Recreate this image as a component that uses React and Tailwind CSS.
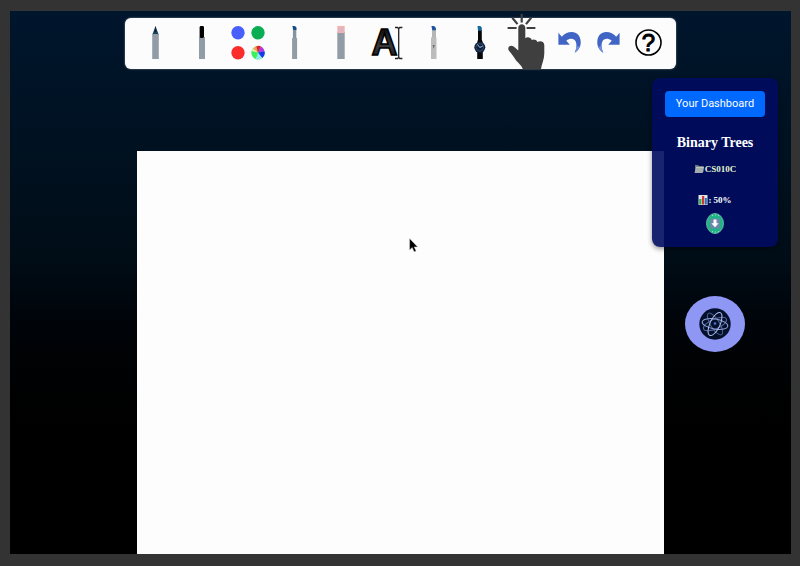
import React from 'react';

function Icon({ children }) {
  return (
    <svg viewBox="0 0 46 51" className="h-[51px] w-[46px] shrink-0 overflow-visible" aria-hidden="true">
      {children}
    </svg>
  );
}

const PenIcon = () => (
  <Icon>
    <path d="M20.200 17 23.500 8l3.300 9z" fill="#17405f" />
    <path d="M22.500 14 23.500 8l1 6z" fill="#0b2238" />
    <rect x="20.200" y="16" width="6.600" height="25" fill="#929ca6" />
  </Icon>
);

const MarkerIcon = () => (
  <Icon>
    <rect x="20" y="19" width="6" height="22" fill="#929ca6" />
    <rect x="20.600" y="8" width="4.400" height="12" rx="1.400" fill="#000" />
  </Icon>
);

const ColorsIcon = () => (
  <Icon>
    <circle cx="13" cy="14.800" r="6.700" fill="#485ffb" />
    <circle cx="33" cy="14.800" r="6.700" fill="#09ad52" />
    <circle cx="13" cy="34.800" r="6.700" fill="#fb2c2c" />
    <circle cx="33" cy="34.800" r="6.700" fill="#3df05a" />
    <path d="M33 34.800 28 30.400a6.700 6.700 0 0 1 3.400-2.100z" fill="#f4a259" />
    <path d="M33 34.800 31.400 28.300a6.700 6.700 0 0 1 4.400-.1z" fill="#e8202a" />
    <path d="M33 34.800 35.800 28.200a6.700 6.700 0 0 1 3.700 5z" fill="#c32fe8" />
    <path d="M33 34.800 39.500 33.200a6.700 6.700 0 0 1-2.300 6.800z" fill="#1737ef" />
    <path d="M33 34.800 37.200 40a6.700 6.700 0 0 1-6.400 1z" fill="#8fe8ee" />
    <path d="M33 34.800 28 30.400a6.700 6.700 0 0 0-1.400 2.400z" fill="#f4e6b0" />
  </Icon>
);

const FinePenIcon = () => (
  <Icon>
    <rect x="21.900" y="11" width="3.400" height="10" fill="#8494a5" />
    <rect x="21.100" y="20" width="5" height="21" fill="#929ca6" />
    <path d="M21.300 8h2.600l1.600 1.600V12h-3.200z" fill="#174c86" />
  </Icon>
);

const EraserIcon = () => (
  <Icon>
    <rect x="19.300" y="14" width="7.400" height="27" fill="#929ca6" />
    <rect x="19.300" y="8" width="7.400" height="7" fill="#efb4b2" />
    <path d="M21 14l4-4M21 10.500l4 3" stroke="#d0b5dc" strokeWidth="1" />
  </Icon>
);

const TextIcon = () => (
  <Icon>
    <defs>
      <linearGradient id="letter" x1="0" y1="0" x2="0" y2="1">
        <stop offset="0" stopColor="#000" />
        <stop offset="0.600" stopColor="#3a3a3a" />
        <stop offset="1" stopColor="#050505" />
      </linearGradient>
    </defs>
    <text
      x="7.500"
      y="37"
      className="font-['Liberation_Sans',sans-serif] text-[36px] font-bold"
      fill="url(#letter)"
      stroke="#000"
      strokeWidth="1.500"
    >
      A
    </text>
    <path d="M31 9.500h2.700l1 1.300 1-1.300h2.700M34.700 10.500v29M31 40.500h2.700l1-1.300 1 1.300h2.700" fill="none" stroke="#222" strokeWidth="1.300" />
  </Icon>
);

const LightPenIcon = () => (
  <Icon>
    <rect x="21" y="10" width="4" height="11" fill="#b4b6b8" />
    <rect x="20" y="19.500" width="5.500" height="21.500" fill="#bcbcbc" />
    <path d="M20.400 8h2.800l1.700 2v2.300h-3.600z" fill="#1c56a0" />
    <path d="M21.700 27h2l-1 4z" fill="#666" />
  </Icon>
);

const WatchIcon = () => (
  <Icon>
    <path d="M21 12h3.800v9.500l1 3v16.500H20.200V24.500l.8-3z" fill="#05070b" />
    <path d="M20.500 8h2.800l1.500 1.500v3.200H21z" fill="#19699c" />
    <circle cx="22.800" cy="29.300" r="5.500" fill="#101f38" />
    <circle cx="22.800" cy="29.300" r="3.800" fill="none" stroke="#34547e" strokeWidth="0.800" />
    <path d="M20.500 26.500l2.300 3 3-1.500" fill="none" stroke="#b9cbe4" strokeWidth="0.900" />
  </Icon>
);

const HandIcon = () => (
  <Icon>
    <path
      d="M20 51.500c-1.500-4.500-5-6.500-7.400-9.800-2-2.800-3.700-5.700-6-8.200-3.400-3.700.4-7.700 4.400-4.700l4.300 3.700V9.800c0-4.700 7-4.700 7 0v10.400c1.700-1.600 5.800-1 6.500 1.800 1.800-1.300 5-.5 5.700 2 2.500-1.600 6.800-1 6.800 3.300v8c0 6-2.500 10.500-3.400 16.200z"
      fill="#3f3f3f"
    />
    <g stroke="#3f3f3f" strokeWidth="2.200">
      <path d="M18.700-4v8.400M9.300-.2l5.200 6.300M28.200-.2l-5.200 6.300M4.600 10h9M23.600 10h8.800" />
    </g>
  </Icon>
);

function CurvedArrow() {
  return (
    <>
      <path
        d="M11.400 14.700v12h11.400l-3.500-4c3.500-2.700 7.700-2.700 9.400.8 1.400 3 .9 7.200-1 11.200 4.300-2.700 6.300-6.500 6-11.200-.4-6-4-9.500-8.700-9.500-4.300 0-7.800 1.800-10.200 4.700z"
        fill="#4165c5"
      />
      <path d="M28.700 23.500c1.400 3 .9 7.200-1 11.200 2.700-1.700 4.400-3.900 5.300-6.400-1.600 1.400-2.900-.3-4.300-4.800z" fill="#6f8edb" />
    </>
  );
}

const UndoIcon = () => (
  <Icon>
    <CurvedArrow />
  </Icon>
);

const RedoIcon = () => (
  <Icon>
    <g transform="matrix(-1 0 0 1 45 0)">
      <CurvedArrow />
    </g>
  </Icon>
);

const HelpIcon = () => (
  <Icon>
    <circle cx="22.500" cy="24.500" r="12.500" fill="none" stroke="#000" strokeWidth="1.600" />
    <text
      x="22.500"
      y="33"
      textAnchor="middle"
      stroke="#000"
      strokeWidth="1"
      className="font-['Liberation_Sans',sans-serif] text-[24px]"
    >
      ?
    </text>
  </Icon>
);

const tools = [
  ['Pen', PenIcon],
  ['Marker', MarkerIcon],
  ['Colors', ColorsIcon],
  ['Fine pen', FinePenIcon],
  ['Eraser', EraserIcon],
  ['Text', TextIcon],
  ['Highlighter', LightPenIcon],
  ['Laser', WatchIcon],
  ['Pointer', HandIcon],
  ['Undo', UndoIcon],
  ['Redo', RedoIcon],
  ['Help', HelpIcon],
];

function Toolbar() {
  return (
    <div
      role="toolbar"
      aria-label="Drawing tools"
      className="grid w-full max-w-[551px] grid-cols-[repeat(9,minmax(0,7fr))_repeat(3,minmax(0,6fr))] rounded-md bg-[#fcfcfd] px-[7px] shadow-[0_0_2px_#8a93a0]"
    >
      {tools.map(([label, Glyph]) => (
        <button key={label} type="button" aria-label={label} className="flex h-[51px] items-center justify-center">
          <Glyph />
        </button>
      ))}
    </div>
  );
}

function FolderIcon() {
  return (
    <svg viewBox="0 0 10 10" className="size-[10px]" aria-hidden="true">
      <path d="M1 1h3l1 1h4.500v6H1z" fill="#6d7478" />
      <path d="M2 3.300h8L8.700 9H.500z" fill="#a5acb0" />
      <path d="M2 3.300h8" stroke="#e1e4e6" strokeWidth="0.700" />
    </svg>
  );
}

function ChartIcon() {
  return (
    <svg viewBox="0 0 10 10" className="size-[10px]" aria-hidden="true">
      <rect width="9" height="10" x="0.500" fill="#dfe6ea" />
      <rect x="1.200" y="4" width="2.200" height="5.500" fill="#2fa84f" />
      <rect x="4" y="1" width="2.200" height="8.500" fill="#d5342f" />
      <rect x="6.800" y="3" width="2" height="6.500" fill="#2c6fb5" />
    </svg>
  );
}

function DownloadIcon() {
  return (
    <svg viewBox="0 0 18 21" className="h-[21px] w-[18px]" aria-hidden="true">
      <ellipse cx="9" cy="10.500" rx="8.500" ry="10" fill="#1fb385" stroke="#7cc9b4" strokeWidth="0.800" />
      <path d="M6 2.500h.8M9 2h.8M12 2.500h.8M6 18.500h.8M9 19h.8M12 18.500h.8" stroke="#c8f0df" strokeWidth="0.900" />
      <rect x="4" y="5.500" width="10" height="10" rx="1.500" fill="#6a88a8" />
      <path d="M7.500 6.500h3v3.800h2.200L9 14.200l-3.700-3.900h2.200z" fill="#fff" />
    </svg>
  );
}

function AtomIcon() {
  return (
    <svg viewBox="0 0 32 32" className="size-8" fill="none" aria-hidden="true">
      <circle cx="16" cy="16" r="15.700" fill="#04102b" />
      <g strokeWidth="1">
        <ellipse cx="16" cy="16" rx="12.500" ry="4.500" stroke="#4a5d8c" transform="rotate(58 16 16)" />
        <ellipse cx="16" cy="16" rx="12.500" ry="5" stroke="#52659a" transform="rotate(-24 16 16)" />
        <ellipse cx="16" cy="16" rx="13" ry="5" stroke="#8fa3dc" transform="rotate(10 16 16)" />
        <ellipse cx="16" cy="16" rx="12.500" ry="5" stroke="#b4c2f0" transform="rotate(-65 16 16)" />
      </g>
      <circle cx="16" cy="15.500" r="1.300" fill="#4a78e0" />
    </svg>
  );
}

function LessonPanel() {
  return (
    <section className="flex w-full flex-col items-center rounded-lg bg-[#000c61]/90 py-[13px] font-['Liberation_Serif',serif] font-bold text-white shadow-[0_2px_5px_rgba(0,0,0,0.4)]">
      <button
        type="button"
        className="h-[26px] w-[100px] rounded bg-[#0069ff] font-[Roboto,sans-serif] text-[11px] font-normal whitespace-nowrap"
      >
        Your Dashboard
      </button>
      <h1 className="mt-4 text-[14px] leading-5">Binary Trees</h1>
      <p className="mt-[9px] flex items-center gap-px text-[9px] leading-[14px] text-[#e3f5d3]">
        <FolderIcon />
        CS010C
      </p>
      <p className="mt-[17px] flex items-center text-[9px] leading-[14px]">
        <ChartIcon />
        : 50%
      </p>
      <button type="button" aria-label="Download" className="mt-[6px]">
        <DownloadIcon />
      </button>
    </section>
  );
}

function Pointer() {
  return (
    <svg viewBox="0 0 10 16" className="absolute top-[227px] left-[399px] h-4 w-[10px]" aria-hidden="true">
      <path d="M.600.500v11.500l2.600-2.400 1.900 4.200 2-.9-1.900-4h3.400z" fill="#000" stroke="#ccc" strokeWidth="0.500" />
    </svg>
  );
}

export default function App() {
  return (
    <div className="flex min-h-screen flex-col bg-[#333] pt-[11px] pr-[9px] pb-3 pl-[10px]">
      <main className="relative flex flex-1 flex-col items-center bg-linear-to-b from-[#00162d] via-[#000d17] via-45% to-black to-85% pt-[7px]">
        <Toolbar />
        <div className="mt-[82px] w-full max-w-[527px] flex-1 bg-[#fdfdfd]" />
        <Pointer />
        <aside className="absolute top-[67px] right-[13px] flex w-[126px] flex-col items-center">
          <LessonPanel />
          <button
            type="button"
            aria-label="Assistant"
            className="mt-[49px] flex h-14 w-[60px] items-center justify-center rounded-[50%] bg-[#8f97f5]"
          >
            <AtomIcon />
          </button>
        </aside>
      </main>
    </div>
  );
}
